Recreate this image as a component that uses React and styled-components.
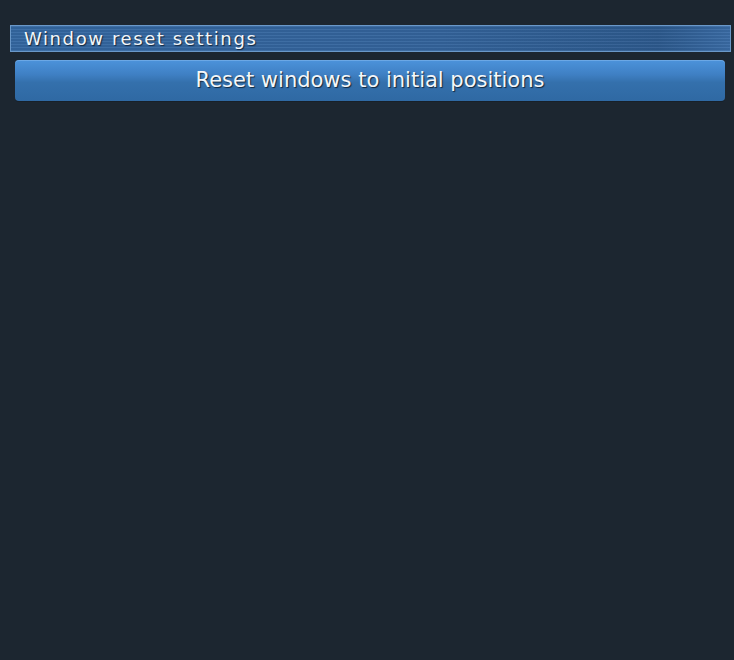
import React from 'react';
import styled, { createGlobalStyle } from 'styled-components';

const GlobalStyle = createGlobalStyle`
  html, body {
    margin: 0;
    padding: 0;
    background: #1c2630;
  }
  body {
    font-family: "DejaVu Sans", "Open Sans", sans-serif;
  }
`;

const Page = styled.div`
  width: 734px;
  height: 660px;
  background: #1c2630;
  padding: 25px 3px 0 10px;
  box-sizing: border-box;
  display: flex;
  flex-direction: column;
`;

const SectionHeader = styled.div`
  height: 27px;
  box-sizing: border-box;
  border: 1px solid #6a98c8;
  background:
    repeating-linear-gradient(
      180deg,
      rgba(255, 255, 255, 0.05) 0px,
      rgba(255, 255, 255, 0.05) 1px,
      rgba(0, 0, 0, 0.06) 1px,
      rgba(0, 0, 0, 0.06) 3px
    ),
    linear-gradient(90deg, #3468a2 0%, #34649c 60%, #2d5a8e 90%, #3a6ca6 100%);
  color: #f2f6fa;
  font-size: 18px;
  letter-spacing: 1.6px;
  line-height: 25px;
  padding-left: 13px;
  text-shadow: 1px 1px 1px rgba(0, 0, 0, 0.6);
`;

const ButtonRow = styled.div`
  padding: 8px 6px 0 5px;
`;

const ActionButton = styled.button`
  width: 100%;
  height: 41px;
  border: none;
  border-radius: 4px;
  background: linear-gradient(180deg, #4c93db 0%, #3f80c4 35%, #3470ac 55%, #2f69a3 100%);
  box-shadow: inset 0 1px 0 rgba(140, 190, 240, 0.5), 0 1px 0 #172029;
  color: #f4f7fa;
  font-family: "DejaVu Sans", "Open Sans", sans-serif;
  font-size: 21px;
  font-weight: normal;
  text-shadow: 1px 1px 1px rgba(0, 0, 0, 0.65);
  cursor: pointer;
  padding: 0 0 2px;
`;

export default function App() {
  return (
    <>
      <GlobalStyle />
      <Page>
        <SectionHeader>Window reset settings</SectionHeader>
        <ButtonRow>
          <ActionButton>Reset windows to initial positions</ActionButton>
        </ButtonRow>
      </Page>
    </>
  );
}
